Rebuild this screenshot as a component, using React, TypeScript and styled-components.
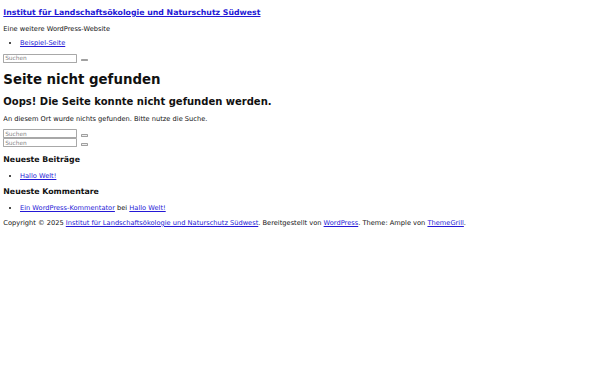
import styled, { createGlobalStyle } from 'styled-components'

// the page is a 1440px wide layout shown at 600px
const S = 600 / 1440
const px = (n: number) => `${(n * S).toFixed(3)}px`

const GlobalStyle = createGlobalStyle`
  html, body {
    background: #fff;
  }
  body {
    margin: 0 ${px(8)};
    font-family: "DejaVu Sans", "Noto Sans", sans-serif;
    font-size: ${px(16)};
    color: #111;
  }
  a {
    color: #2418d6;
    text-decoration: underline;
  }
`

const Page = styled.div`
  display: flow-root;
`

const Header = styled.header``

const SiteTitle = styled.h3`
  font-size: 1.17em;
  font-weight: bold;
  margin: 1em 0;
`

const Tagline = styled.p`
  margin: 1em 0;
`

const Menu = styled.ul`
  margin: 1em 0;
  padding-left: ${px(40)};
  list-style: disc;
`

const SearchForm = styled.form`
  margin: 0;
  display: block;
`

const SearchInput = styled.input`
  box-sizing: border-box;
  width: ${px(178)};
  height: ${px(21)};
  margin: 0;
  padding: 0 ${px(2)};
  border: 1px solid #a8a8a8;
  border-radius: ${px(2)};
  font-family: "DejaVu Sans", sans-serif;
  font-size: ${px(14)};
  color: #000;
  vertical-align: baseline;

  &::placeholder {
    color: #858585;
  }
`

const SearchButton = styled.button`
  box-sizing: border-box;
  width: ${px(16)};
  height: ${px(6)};
  margin: 0 0 0 ${px(4)};
  padding: 0;
  border: 1px solid #a0a0a0;
  border-radius: ${px(2)};
  background: #efefef;
  vertical-align: baseline;
`

const Main = styled.main``

const PageTitle = styled.h1`
  font-size: 2em;
  margin: 0.67em 0;
`

const Notice = styled.h2`
  font-size: 1.5em;
  margin: 0.83em 0;
`

const Text = styled.p`
  margin: 1em 0;
`

const WidgetTitle = styled.h3`
  font-size: 1.17em;
  margin: 1em 0;
`

const WidgetList = styled.ul`
  margin: 1em 0;
  padding-left: ${px(40)};
  list-style: disc;
`

const Footer = styled.footer``

const Copyright = styled.p`
  margin: 1em 0;
`

const Search = () => (
  <SearchForm onSubmit={e => e.preventDefault()}>
    <SearchInput type="search" placeholder="Suchen" />{' '}
    <SearchButton type="submit" aria-label="Suchen" />
  </SearchForm>
)

export default function App() {
  return (
    <Page>
      <GlobalStyle />
      <Header>
        <SiteTitle>
          <a href="#">Institut für Landschaftsökologie und Naturschutz Südwest</a>
        </SiteTitle>
        <Tagline>Eine weitere WordPress-Website</Tagline>
        <Menu>
          <li><a href="#">Beispiel-Seite</a></li>
        </Menu>
        <Search />
      </Header>

      <Main>
        <PageTitle>Seite nicht gefunden</PageTitle>
        <Notice>Oops! Die Seite konnte nicht gefunden werden.</Notice>
        <Text>An diesem Ort wurde nichts gefunden. Bitte nutze die Suche.</Text>
        <Search />
        <Search />

        <WidgetTitle>Neueste Beiträge</WidgetTitle>
        <WidgetList>
          <li><a href="#">Hallo Welt!</a></li>
        </WidgetList>

        <WidgetTitle>Neueste Kommentare</WidgetTitle>
        <WidgetList>
          <li>
            <a href="#">Ein WordPress-Kommentator</a> bei <a href="#">Hallo Welt!</a>
          </li>
        </WidgetList>
      </Main>

      <Footer>
        <Copyright>
          Copyright © 2025 <a href="#">Institut für Landschaftsökologie und Naturschutz Südwest</a>.
          Bereitgestellt von <a href="#">WordPress</a>. Theme: Ample von <a href="#">ThemeGrill</a>.
        </Copyright>
      </Footer>
    </Page>
  )
}
